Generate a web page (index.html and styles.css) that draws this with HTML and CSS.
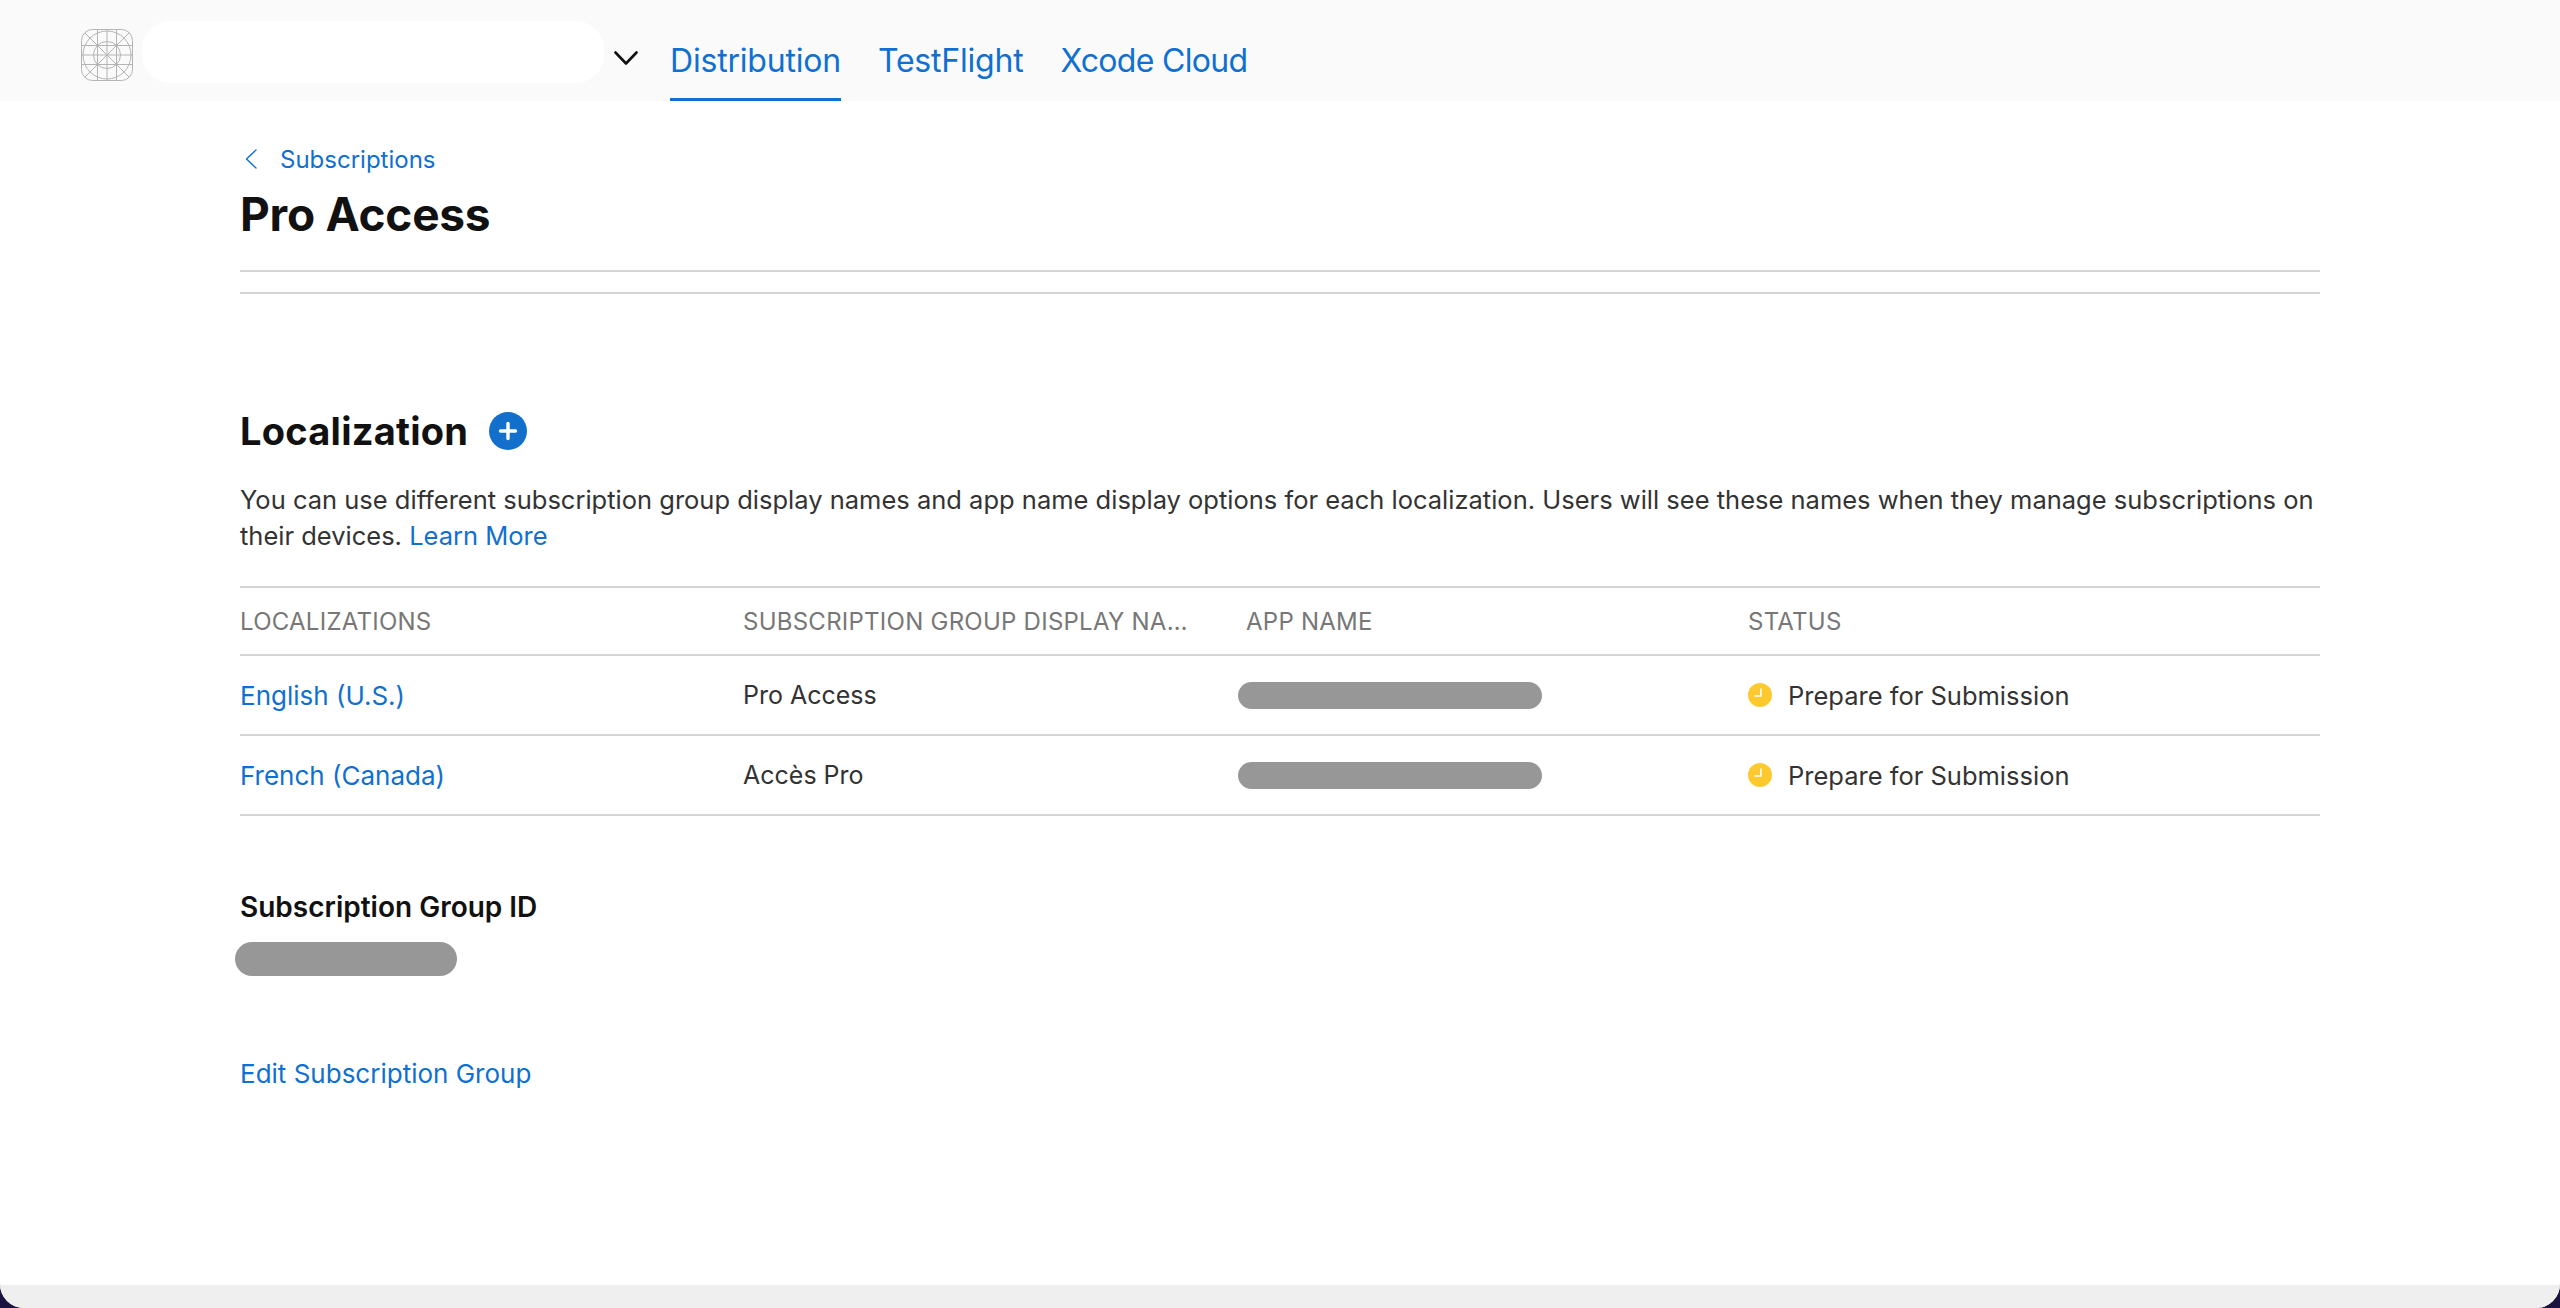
FILE: index.html
```html
<!DOCTYPE html>
<html lang="en">
<head>
    <meta charset="UTF-8">
    <title>Pro Access</title>
    <link rel="stylesheet" href="styles.css">
</head>
<body>
    <div class="window">
        <header class="topbar">
            <svg class="app-icon" width="52" height="52" viewBox="0 0 52 52" fill="none" stroke="#b4b4b4" stroke-width="1">
                <rect x="0.5" y="0.5" width="51" height="51" rx="11"/>
                <path d="M0.5 16.5H51.5M0.5 26H51.5M0.5 35.5H51.5M16.5 0.5V51.5M26 0.5V51.5M35.5 0.5V51.5M4 4L48 48M48 4L4 48"/>
                <circle cx="26" cy="26" r="24"/>
                <circle cx="26" cy="26" r="13.5"/>
            </svg>
            <div class="redacted-name"></div>
            <svg class="team-chevron" width="24" height="14" viewBox="0 0 24 14" fill="none" stroke="#111" stroke-width="2.6" stroke-linecap="round" stroke-linejoin="round">
                <path d="M1.5 1.5L12 12.5L22.5 1.5"/>
            </svg>
            <nav class="nav">
                <a class="nav-link active">Distribution</a>
                <a class="nav-link">TestFlight</a>
                <a class="nav-link">Xcode Cloud</a>
            </nav>
        </header>

        <main class="main">
            <a class="back-link">
                <svg width="12" height="20" viewBox="0 0 12 20" fill="none" stroke="#0f70cf" stroke-width="1.4" stroke-linecap="round" stroke-linejoin="round">
                    <path d="M11 1L1.5 10L11 19"/>
                </svg>
                Subscriptions
            </a>
            <h1 class="page-title">Pro Access</h1>
            <div class="title-rules"></div>

            <div class="section-head">
                <h2 class="section-title">Localization</h2>
                <svg class="add-btn" width="38" height="38" viewBox="0 0 38 38">
                    <circle cx="19" cy="19" r="19" fill="#1270cc"/>
                    <path d="M19 11.5V26.5M11.5 19H26.5" stroke="#fff" stroke-width="3.4" stroke-linecap="round"/>
                </svg>
            </div>
            <p class="section-text">You can use different subscription group display names and app name display options for each localization. Users will see these names when they manage subscriptions on their devices. <a class="link">Learn More</a></p>

            <div class="table">
                <div class="row head-row">
                    <div class="cell">LOCALIZATIONS</div>
                    <div class="cell">SUBSCRIPTION GROUP DISPLAY NAME</div>
                    <div class="cell">APP NAME</div>
                    <div class="cell">STATUS</div>
                </div>
                <div class="row">
                    <div class="cell"><a class="link row-link">English (U.S.)</a></div>
                    <div class="cell">Pro Access</div>
                    <div class="cell"><div class="redacted-cell"></div></div>
                    <div class="cell status">
                        <svg width="24" height="24" viewBox="0 0 24 24"><circle cx="12" cy="12" r="12" fill="#fdc92e"/><path d="M13 5.5V13H6.5" fill="none" stroke="#fff" stroke-width="1.6"/></svg>
                        Prepare for Submission
                    </div>
                </div>
                <div class="row">
                    <div class="cell"><a class="link row-link">French (Canada)</a></div>
                    <div class="cell">Accès Pro</div>
                    <div class="cell"><div class="redacted-cell"></div></div>
                    <div class="cell status">
                        <svg width="24" height="24" viewBox="0 0 24 24"><circle cx="12" cy="12" r="12" fill="#fdc92e"/><path d="M13 5.5V13H6.5" fill="none" stroke="#fff" stroke-width="1.6"/></svg>
                        Prepare for Submission
                    </div>
                </div>
            </div>

            <div class="group-label">Subscription Group ID</div>
            <div class="redacted-id"></div>
            <a class="link edit-link">Edit Subscription Group</a>
        </main>

        <div class="bottom-strip"></div>
    </div>
</body>
</html>
```

FILE: styles.css
```css
html, body {
    margin: 0;
    padding: 0;
}
body {
    background: #1b1440;
    font-family: Inter, "Liberation Sans", sans-serif;
    color: #333;
}
.window {
    height: 1308px;
    display: flex;
    flex-direction: column;
    background: #fff;
    border-radius: 0 0 24px 24px;
    overflow: hidden;
}

/* top bar */
.topbar {
    height: 101px;
    background: #fafafa;
    display: flex;
    align-items: center;
    padding-left: 81px;
    box-sizing: border-box;
    flex-shrink: 0;
}
.app-icon {
    flex-shrink: 0;
    margin-top: 9px;
}
.redacted-name {
    width: 462px;
    height: 62px;
    margin-left: 9px;
    margin-top: 3px;
    background: #fff;
    border-radius: 28px;
}
.team-chevron {
    margin-left: 10px;
    margin-top: 14px;
}
.nav {
    display: flex;
    height: 101px;
    gap: 37px;
    margin-left: 32px;
}
.nav-link {
    font-size: 32px;
    line-height: 36px;
    padding-top: 43px;
    box-sizing: border-box;
    color: #0f70d2;
    letter-spacing: -0.2px;
}
.nav-link:last-child {
    letter-spacing: -0.7px;
}
.nav-link.active {
    border-bottom: 3px solid #0f70d2;
}

/* page content */
.main {
    flex: 1;
    padding: 43px 240px 0;
}
.back-link {
    display: flex;
    align-items: center;
    gap: 23px;
    height: 32px;
    padding-left: 5px;
    font-size: 24px;
    color: #0f70cf;
    position: relative;
    top: -1px;
}
.page-title {
    margin: 10px 0 0;
    font-size: 46px;
    line-height: 56px;
    font-weight: 700;
    color: #111;
    letter-spacing: -0.25px;
}
.title-rules {
    height: 20px;
    margin-top: 28px;
    border-top: 2px solid #d4d4d4;
    border-bottom: 2px solid #d4d4d4;
}
.section-head {
    display: flex;
    align-items: center;
    gap: 21px;
    height: 40px;
    margin-top: 117px;
}
.section-title {
    margin: 0;
    font-size: 38px;
    line-height: 40px;
    font-weight: 700;
    color: #111;
    letter-spacing: 0.25px;
}
.section-text {
    margin: 31px 0 0;
    font-size: 25.5px;
    line-height: 36px;
    color: #333;
}
.link {
    color: #0f70cf;
}

/* table */
.table {
    margin-top: 32px;
    border-top: 2px solid #d4d4d4;
}
.row {
    display: grid;
    grid-template-columns: 503px 503px 502px 1fr;
    align-items: center;
    height: 78px;
    border-bottom: 2px solid #d4d4d4;
    font-size: 25px;
}
.head-row {
    height: 66px;
    font-size: 24px;
    letter-spacing: 0.25px;
    color: #777;
}
.cell {
    white-space: nowrap;
    overflow: hidden;
    text-overflow: ellipsis;
    padding-right: 56px;
}
.row-link {
    font-size: 26px;
}
.status {
    display: flex;
    align-items: center;
    gap: 16px;
    padding-right: 0;
    font-size: 25.5px;
}
.redacted-cell {
    width: 304px;
    height: 27px;
    margin-left: -8px;
    background: #979797;
    border-radius: 14px;
}
.cell:has(.redacted-cell) {
    overflow: visible;
}
.group-label {
    margin-top: 75px;
    font-size: 28px;
    line-height: 32px;
    font-weight: 600;
    color: #111;
}
.redacted-id {
    width: 222px;
    height: 34px;
    margin: 19px 0 0 -5px;
    background: #979797;
    border-radius: 17px;
}
.edit-link {
    display: block;
    margin-top: 82px;
    font-size: 26px;
    line-height: 32px;
}
.bottom-strip {
    height: 23px;
    background: #efefef;
    flex-shrink: 0;
}
```
